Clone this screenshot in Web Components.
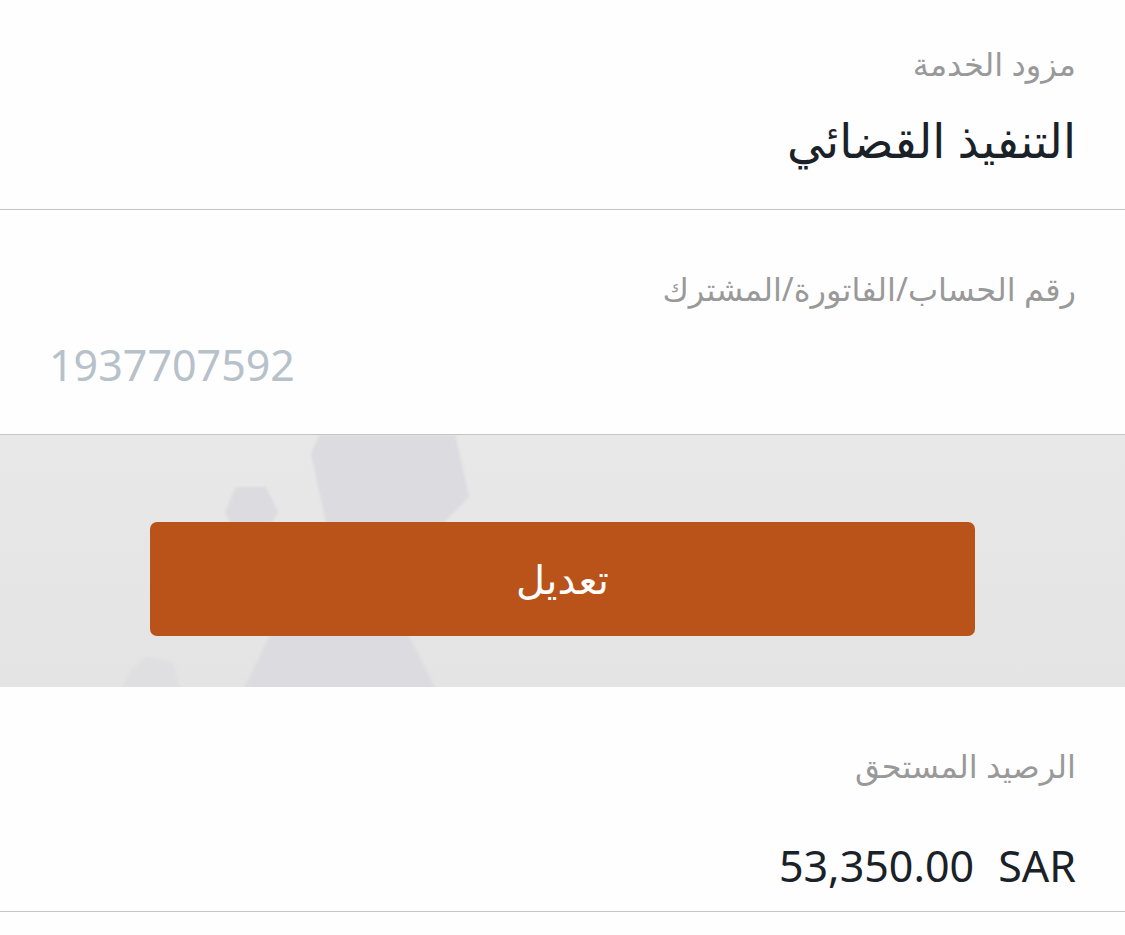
<!DOCTYPE html>
<html lang="ar" dir="rtl">
<head>
<meta charset="utf-8">
<meta name="viewport" content="width=device-width, initial-scale=1">
<title>التنفيذ القضائي</title>
<style>
  body {
    margin: 0;
    background: #fefefe;
    color: #1a2127;
    font-family: "Noto Sans", "DejaVu Sans", sans-serif;
  }
</style>
</head>
<body>
<bill-page></bill-page>

<script>
/**
 * One label + value row.
 * Attributes: label, number (renders a locked text box instead of the slot)
 */
class BillField extends HTMLElement {
  constructor() {
    super();
    this.attachShadow({ mode: 'open' });
  }

  connectedCallback() {
    const label = this.getAttribute('label') || '';
    const number = this.getAttribute('number');

    this.shadowRoot.innerHTML = `
      <style>
        :host {
          display: flex;
          flex-direction: column;
          gap: var(--field-gap, 20px);
          padding: var(--field-top, 55px) 49px var(--field-bottom, 37px);
          border-bottom: 1px solid #c3c5c6;
        }
        .label {
          color: #999;
          font-size: 32px;
          line-height: 48px;
        }
        .value {
          font-size: var(--value-size, 43px);
          line-height: 64px;
        }
        input {
          width: 100%;
          height: 64px;
          box-sizing: border-box;
          padding: 0;
          border: 0;
          background: none;
          color: #b7c1c9;
          font-family: inherit;
          text-align: left;
        }
      </style>
      ${number
        ? `<label class="label" for="number">${label}</label>
           <input class="value" id="number" type="text" dir="ltr" value="${number}" disabled>`
        : `<div class="label">${label}</div>
           <div class="value"><slot></slot></div>`}
    `;
  }
}

/* amount and currency, currency on the right */
class BillAmount extends HTMLElement {
  constructor() {
    super();
    this.attachShadow({ mode: 'open' });
    this.shadowRoot.innerHTML = `
      <style>
        :host { display: flex; gap: 24px; }
      </style>
      <slot name="currency"></slot>
      <slot></slot>
    `;
  }
}

/* grey band with faint hexagons behind the action */
class ActionBand extends HTMLElement {
  constructor() {
    super();
    this.attachShadow({ mode: 'open' });
    this.shadowRoot.innerHTML = `
      <style>
        :host {
          display: block;
          position: relative;
          overflow: hidden;
          padding: 87px 150px 51px;
          background: linear-gradient(180deg, #e8e8e8 0%, #e4e4e4 100%);
        }
        svg {
          position: absolute;
          top: 0;
          left: 0;
          filter: blur(1px);
        }
        button {
          display: block;
          position: relative;
          width: 100%;
          height: 114px;
          padding: 0;
          border: 0;
          border-radius: 7px;
          background: #ba5319;
          color: #fff;
          font-family: inherit;
          font-size: 40px;
          line-height: 64px;
          cursor: pointer;
        }
      </style>
      <svg width="560" height="260" viewBox="0 0 560 260" aria-hidden="true">
        <g fill="#dcdbe0" stroke="#dcdbe0" stroke-width="4" stroke-linejoin="round">
          <path d="M313 19 L324 -6 H452 L467 61 L432 97 H330 Z"/>
          <path d="M237 54 H265 L276 77 L263 99 H238 L227 77 Z"/>
          <path d="M243 260 L277 190 H401 L437 260 Z"/>
          <path d="M121 260 L132 237 L147 224 L171 229 L180 260 Z" opacity=".6"/>
        </g>
      </svg>
      <button type="button"><slot></slot></button>
    `;
  }
}

class BillPage extends HTMLElement {
  constructor() {
    super();
    this.attachShadow({ mode: 'open' });
    this.shadowRoot.innerHTML = `
      <style>
        :host { display: block; }
        .provider { --field-top: 40px; --value-size: 47px; }
        .balance { --field-gap: 44px; --field-bottom: 13px; }
      </style>
      <main>
        <bill-field class="provider" label="مزود الخدمة">التنفيذ القضائي</bill-field>
        <bill-field label="رقم الحساب/الفاتورة/المشترك" number="1937707592"></bill-field>
        <action-band>تعديل</action-band>
        <bill-field class="balance" label="الرصيد المستحق">
          <bill-amount><span slot="currency">SAR</span><span>53,350.00</span></bill-amount>
        </bill-field>
      </main>
    `;
  }
}

customElements.define('bill-field', BillField);
customElements.define('bill-amount', BillAmount);
customElements.define('action-band', ActionBand);
customElements.define('bill-page', BillPage);
</script>
</body>
</html>
